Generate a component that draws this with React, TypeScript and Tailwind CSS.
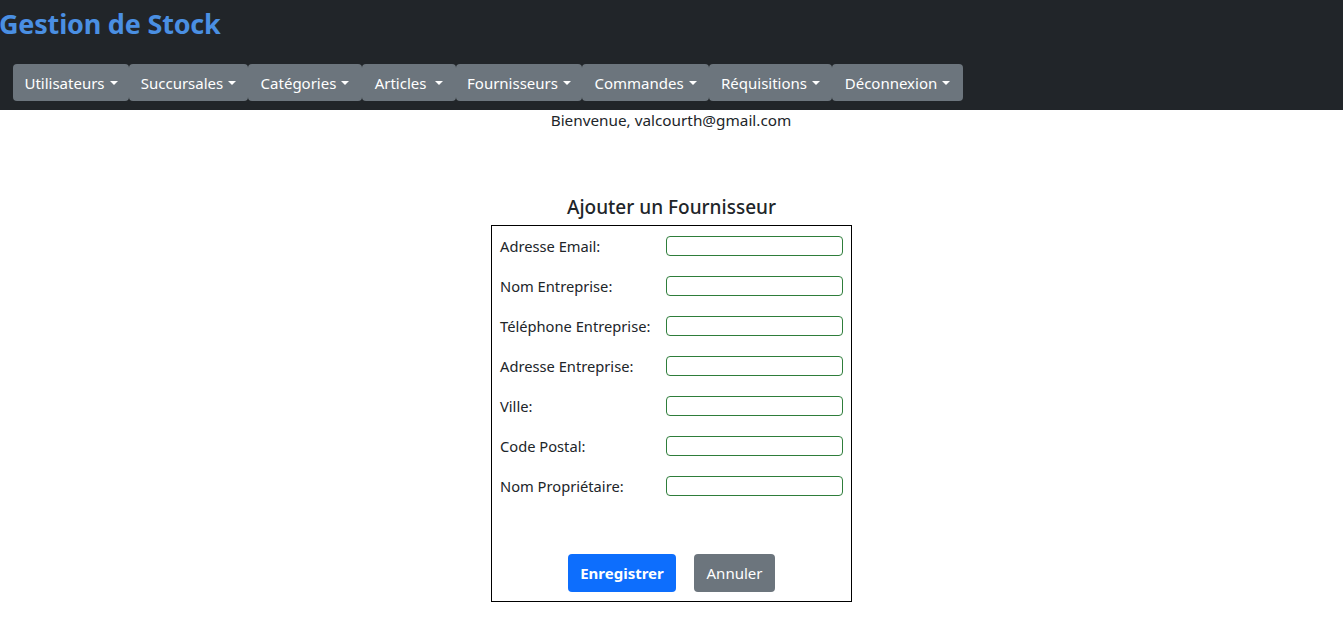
import React from "react";

const menus = [
  { label: "Utilisateurs", w: 116 },
  { label: "Succursales", w: 119 },
  { label: "Catégories", w: 114 },
  { label: "Articles ", w: 94 },
  { label: "Fournisseurs", w: 126 },
  { label: "Commandes", w: 127 },
  { label: "Réquisitions", w: 123 },
  { label: "Déconnexion", w: 131 },
];

const fields = [
  "Adresse Email:",
  "Nom Entreprise:",
  "Téléphone Entreprise:",
  "Adresse Entreprise:",
  "Ville:",
  "Code Postal:",
  "Nom Propriétaire:",
];

function Caret() {
  return (
    <span className="ml-[5px] inline-block w-0 h-0 border-l-[4px] border-r-[4px] border-t-[4px] border-l-transparent border-r-transparent border-t-white align-[3px]" />
  );
}

export default function App() {
  return (
    <div className="min-h-screen bg-white" style={{ fontFamily: '"Noto Sans", "Open Sans", sans-serif' }}>
      <header className="bg-[#212529] h-[110px] flex flex-col">
        <h1 className="text-[27px] leading-[48px] font-bold text-[#4a8fe2] tracking-[-0.2px] -ml-[1px]">Gestion de Stock</h1>
        <nav className="mt-[16px] ml-[13px] flex">
          {menus.map((m) => (
            <button
              key={m.label}
              style={{ width: m.w }}
              className="h-[37px] bg-[#6c757d] text-white text-[15px] rounded-[4px] flex items-center justify-center whitespace-pre border-0 pt-[1px]"
            >
              {m.label}
              <Caret />
            </button>
          ))}
        </nav>
      </header>
      <p className="text-center text-[15.3px] text-[#212529] -mt-[1px] leading-[22px] -ml-[1px]">Bienvenue, valcourth@gmail.com</p>
      <div className="flex flex-col items-center mt-[61px]">
        <h2 className="text-[19px] font-medium text-[#212529] leading-[30px]">Ajouter un Fournisseur</h2>
        <div className="w-[361px] h-[377px] border border-black mt-[3px] flex flex-col">
          <div className="flex flex-col gap-[20px] pt-[10px] pl-[8px]">
            {fields.map((f) => (
              <div key={f} className="flex items-center h-[20px]">
                <label className="w-[166px] text-[14.7px] text-[#212529]">{f}</label>
                <input className="w-[177px] h-[20px] border border-[#2e7d3a] rounded-[4px] outline-none" />
              </div>
            ))}
          </div>
          <div className="flex justify-center gap-[18px] mt-[58px]">
            <button className="w-[108px] h-[38px] bg-[#0d6efd] text-white font-bold text-[15px] rounded-[4px]">Enregistrer</button>
            <button className="w-[81px] h-[38px] bg-[#6c757d] text-white text-[15px] rounded-[4px]">Annuler</button>
          </div>
        </div>
      </div>
    </div>
  );
}
